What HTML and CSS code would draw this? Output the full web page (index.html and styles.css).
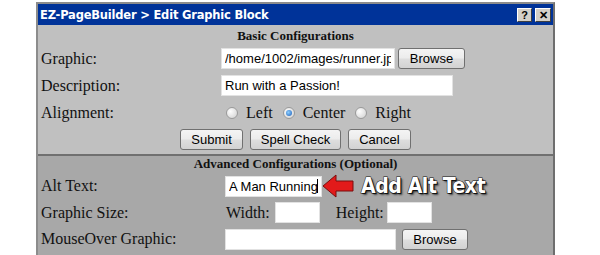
FILE: index.html
```html
<!DOCTYPE html>
<html>
<head>
<meta charset="utf-8">
<link rel="stylesheet" href="styles.css">
</head>
<body>
<div class="win">
  <div class="titlebar">
    <span class="title">EZ-PageBuilder &gt; Edit Graphic Block</span>
    <span class="tbtns"><span class="tbtn">?</span><span class="tbtn x">✕</span></span>
  </div>
  <div class="basic">
    <div class="heading">Basic Configurations</div>
    <div class="row">
      <div class="label">Graphic:</div>
      <div class="val"><input class="txt w174" type="text" value="/home/1002/images/runner.jpg"><button class="btn browse">Browse</button></div>
    </div>
    <div class="row">
      <div class="label">Description:</div>
      <div class="val"><input class="txt w232" type="text" value="Run with a Passion!"></div>
    </div>
    <div class="row">
      <div class="label">Alignment:</div>
      <div class="val radios">
        <span class="radio"></span><span class="rlabel">Left</span>
        <span class="radio on"></span><span class="rlabel">Center</span>
        <span class="radio"></span><span class="rlabel">Right</span>
      </div>
    </div>
    <div class="btnrow">
      <button class="btn">Submit</button><button class="btn">Spell Check</button><button class="btn">Cancel</button>
    </div>
  </div>
  <div class="adv">
    <div class="heading">Advanced Configurations (Optional)</div>
    <div class="row">
      <div class="label">Alt Text:</div>
      <div class="val"><input class="txt w97" type="text" value="A Man Running"><span class="caret"></span>
        <svg class="arrow" width="32" height="24" viewBox="0 0 32 24"><polygon points="1,12 14,1 14,7 31,7 31,17 14,17 14,23" fill="#e21a1a" stroke="#7a0d0d" stroke-width="1"/></svg>
        <span class="callout">Add Alt Text</span>
      </div>
    </div>
    <div class="row">
      <div class="label">Graphic Size:</div>
      <div class="val"><span class="sl">Width:</span><input class="txt w45" type="text"><span class="sl hl">Height:</span><input class="txt w45" type="text"></div>
    </div>
    <div class="row">
      <div class="label">MouseOver Graphic:</div>
      <div class="val"><input class="txt w171" type="text"><button class="btn browse2">Browse</button></div>
    </div>
  </div>
</div>
</body>
</html>
```

FILE: styles.css
```css
html, body { margin: 0; padding: 0; background: #fff; }
body { font-family: "Liberation Serif", "Times New Roman", serif; color: #111; }
.win {
  margin: 2px 0 0 36px;
  width: 519px;
  height: 253px;
  box-sizing: border-box;
  border: 2px solid #8c8c8c;
  border-right-color: #6e6e6e;
  border-bottom: none;
  background: #c0c0c0;
  overflow: hidden;
}
.titlebar {
  height: 21px;
  background: #003399;
  display: flex;
  align-items: center;
  justify-content: space-between;
  padding: 0 2px 0 2px;
}
.title {
  color: #fff;
  font-family: "DejaVu Sans", Tahoma, sans-serif;
  font-weight: bold;
  font-size: 11.5px;
  letter-spacing: -0.2px;
}
.tbtns { display: flex; gap: 3px; }
.tbtn {
  width: 13px; height: 12px;
  background: #d4d0c8;
  border: 1px solid;
  border-color: #fff #404040 #404040 #fff;
  font-family: "Liberation Sans", Arial, sans-serif;
  font-weight: bold;
  font-size: 11px;
  line-height: 12px;
  text-align: center;
  color: #000;
}
.tbtn.x { width: 14px; font-size: 11px; }
.basic { padding-bottom: 1px; }
.heading {
  text-align: center;
  font-weight: bold;
  font-size: 13px;
  height: 20px;
  line-height: 22px;
}
.row { display: flex; align-items: center; height: 27px; }
.label { width: 180px; padding-left: 3px; font-size: 16px; }
.val { display: flex; align-items: center; }
.adv .label { width: 184px; }
.txt {
  box-sizing: border-box;
  height: 21px;
  border: 1px solid #e2e2e2;
  background: #fff;
  font-family: "Liberation Sans", Arial, sans-serif;
  font-size: 13px;
  padding: 0 3px;
  margin: 0;
  color: #000;
  outline: none;
}
.w174 { width: 174px; }
.w232 { width: 232px; }
.w97 { width: 97px; }
.w45 { width: 45px; }
.w171 { width: 171px; }
.btn {
  box-sizing: border-box;
  height: 21px;
  border: 1px solid #707070;
  border-radius: 3px;
  background: linear-gradient(#f4f4f4 0%, #ececec 48%, #dedede 52%, #d2d2d2 100%);
  font-family: "Liberation Sans", Arial, sans-serif;
  font-size: 13px;
  color: #000;
  padding: 0 10px;
  margin: 0;
}
.browse { margin-left: 3px; width: 67px; padding: 0; }
.browse2 { margin-left: 6px; width: 66px; padding: 0; }
.radios { font-size: 16px; }
.radio {
  width: 12px; height: 12px;
  border-radius: 50%;
  border: 1px solid #9a9a9a;
  background: radial-gradient(circle at 35% 35%, #fdfdfd, #cfcfcf);
  margin: 0 8px 0 5px;
  box-sizing: border-box;
  position: relative;
}
.radio.on::after {
  content: "";
  position: absolute;
  left: 2px; top: 2px;
  width: 6px; height: 6px;
  border-radius: 50%;
  background: radial-gradient(circle at 40% 40%, #8ed0ff, #1a5bb8);
}
.rlabel { margin-right: 5px; }
.btnrow {
  height: 27px;
  display: flex;
  align-items: center;
  justify-content: center;
  gap: 7px;
}
.adv {
  border-top: 2px solid #707070;
  background: #a8a8a8;
  height: 120px;
}
.adv .heading { height: 17px; line-height: 15px; }
.adv .row { height: 26.5px; }
.caret { width: 1px; height: 14px; background: #000; margin-left: -5px; margin-right: 4px; }
.arrow { margin-left: 0px; margin-right: 7px; }
.callout {
  font-family: "DejaVu Sans Condensed", "DejaVu Sans", sans-serif;
  font-stretch: condensed;
  font-weight: bold;
  font-size: 21px;
  color: #fff;
  -webkit-text-stroke: 1px #111;
  paint-order: stroke fill;
  text-shadow: 1px 1px 0 #111, 2px 2px 2px rgba(0,0,0,0.6);
  letter-spacing: -0.4px;
}
.sl { font-size: 16px; margin-left: 1px; margin-right: 5px; }
.hl { margin-left: 16px; margin-right: 3px; }
```
